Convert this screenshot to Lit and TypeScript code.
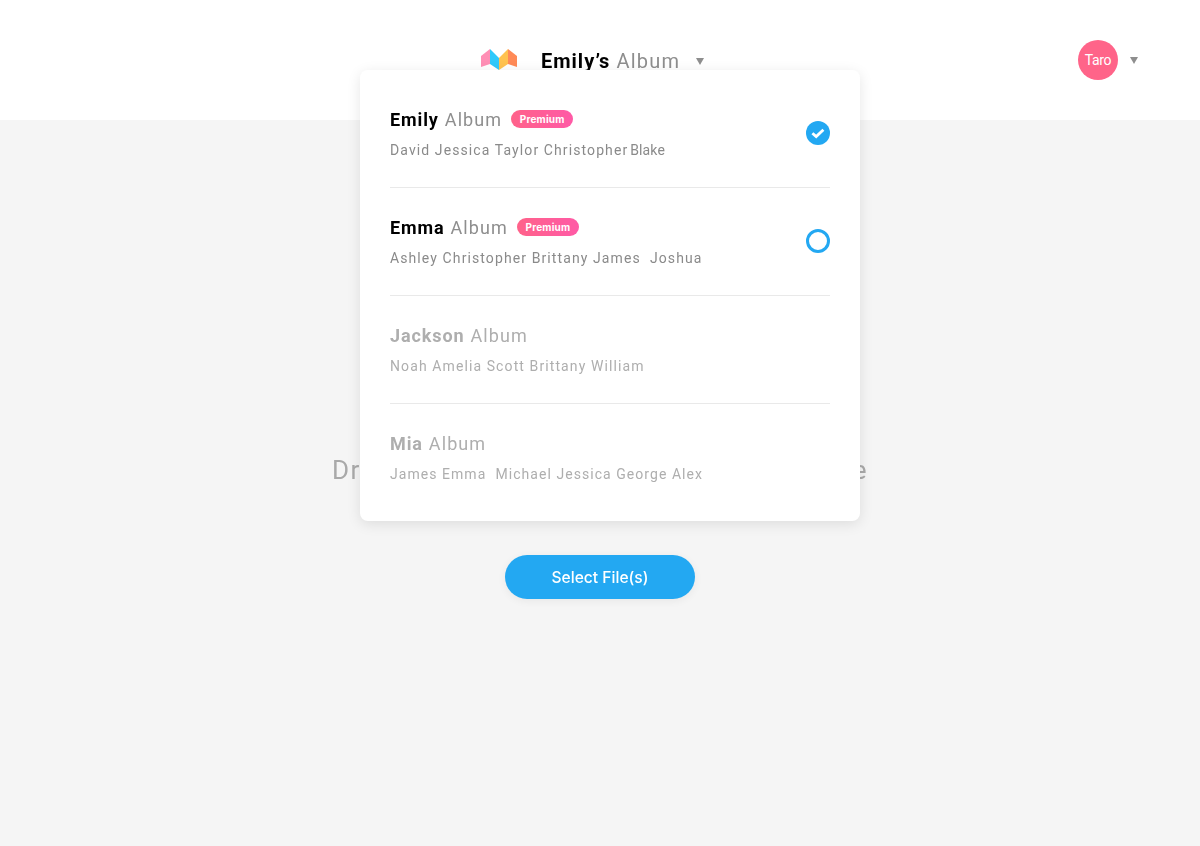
import { LitElement, html, css } from "lit";
import { customElement } from "lit/decorators.js";

interface Album { name: string; people: string[]; premium: boolean; state: "checked" | "open" | "none"; muted: boolean; }

const ALBUMS: Album[] = [
  { name: "Emily", people: ["David Jessica Taylor Christopher", "Blake"], premium: true, state: "checked", muted: false },
  { name: "Emma", people: ["Ashley Christopher Brittany James \u00a0Joshua"], premium: true, state: "open", muted: false },
  { name: "Jackson", people: ["Noah Amelia Scott Brittany William"], premium: false, state: "none", muted: true },
  { name: "Mia", people: ["James Emma \u00a0Michael Jessica George Alex"], premium: false, state: "none", muted: true },
];

@customElement("app-root")
export class AppRoot extends LitElement {
  static styles = css`
    :host { display: block; position: relative; min-height: 846px; background: #f5f5f5; font-family: Roboto, "Liberation Sans", sans-serif; overflow: hidden; }
    .brand-title, .avatar, .drop, .select, .title, .pill, .people { will-change: opacity; }
    .header { height: 120px; background: #fff; display: grid; grid-template-columns: 481px auto 1fr; align-items: center; padding-right: 62px; }
    .brand { display: flex; align-items: center; }
    .logo { width: 36px; height: 22px; display: block; margin-right: 24px; }
    .brand-title { font-size: 20px; letter-spacing: 1.2px; color: #8e8e8e; margin: 2px 16px 0 0; white-space: nowrap; line-height: 24px; }
    .brand-title b { color: #000; font-weight: 700; letter-spacing: 1px; }
    .caret { width: 0; height: 0; border-left: 4.5px solid transparent; border-right: 4.5px solid transparent; border-top: 7px solid #8e8e8e; }
    .brand .caret { margin-top: 2px; }
    .user { justify-self: end; display: flex; align-items: center; gap: 12px; }
    .avatar { width: 40px; height: 40px; border-radius: 50%; background: #ff6489; color: #fff; font-size: 14px; letter-spacing: -0.3px; display: flex; align-items: center; justify-content: center; }
    .main { display: flex; flex-direction: column; align-items: center; padding-top: 332px; }
    .drop { font-size: 26px; line-height: 36px; letter-spacing: 1.6px; color: #a9a9a9; white-space: nowrap; }
    .select { margin-top: 67px; width: 190px; height: 44px; border: 0; border-radius: 22px; background: #23a8f2; color: #fff; font: 500 15.6px Inter, sans-serif; box-shadow: 0 2px 8px rgba(0,0,0,.06); padding: 0; }
    .menu { position: absolute; left: 360px; top: 70px; width: 500px; box-sizing: border-box; padding: 10px 30px 0; height: 451px; background: #fff; border-radius: 8px; box-shadow: 0 3px 14px rgba(0,0,0,.1); }
    .row { height: 108px; box-sizing: border-box; display: flex; align-items: center; justify-content: space-between; border-bottom: 1px solid #e9e9e9; }
    .row:last-child { border-bottom-color: transparent; }
    .row-text { display: flex; flex-direction: column; gap: 8px; }
    .title { display: flex; align-items: center; height: 24px; font-size: 18px; letter-spacing: 1.08px; color: #8e8e8e; white-space: nowrap; }
    .title b { color: #000; font-weight: 700; letter-spacing: 0.9px; margin-right: 6px; }
    .pill { margin: -2px 0 0 9px; height: 18px; width: 62px; border-radius: 9px; background: linear-gradient(90deg, #ff628a, #ff5aa6); color: #fff; font: 700 10px/18px Inter, sans-serif; text-align: center; letter-spacing: 0.2px; }
    .people { display: flex; gap: 2px; font-size: 14px; line-height: 20px; letter-spacing: 1.1px; color: #8a8a8a; white-space: pre; }
    .people span + span { letter-spacing: 0.1px; }
    .row:last-child .people { letter-spacing: 1.05px; }
    .muted .title, .muted .title b, .muted .people { color: #aeaeae; }
    .mark { width: 24px; height: 24px; display: block; margin-top: -1px; }
  `;

  private mark(state: Album["state"]) {
    if (state === "checked") return html`<svg class="mark" viewBox="0 0 24 24"><circle cx="12" cy="12" r="12" fill="#23a8f2"/><path d="M6.4 12.2l3.8 3.4 7.2-6.8" fill="none" stroke="#fff" stroke-width="2.8"/></svg>`;
    if (state === "open") return html`<svg class="mark" viewBox="0 0 24 24"><circle cx="12" cy="12" r="10.5" fill="none" stroke="#23a8f2" stroke-width="3"/></svg>`;
    return null;
  }

  render() {
    return html`
      <div class="header">
        <span></span>
        <div class="brand">
          <svg class="logo" viewBox="0 0 36 22">
            <path d="M0 7 9 0v15L0 18z" fill="#ff8fb5"/>
            <path d="M9 0l9 9v12l-9-6z" fill="#2fc9fb"/>
            <path d="M18 9l9-9v15l-9 6z" fill="#ffc24f"/>
            <path d="M27 0l9 7v11l-9-3z" fill="#ff8a57"/>
          </svg>
          <div class="brand-title"><b>Emily’s</b> Album</div>
          <div class="caret"></div>
        </div>
        <div class="user">
          <div class="avatar">Taro</div>
          <div class="caret"></div>
        </div>
      </div>
      <div class="main">
        <div class="drop">Drop your photos and videos to this page</div>
        <button class="select">Select File(s)</button>
      </div>
      <div class="menu">
        ${ALBUMS.map(a => html`
          <div class="row ${a.muted ? "muted" : ""}">
            <div class="row-text">
              <div class="title"><b>${a.name}</b> Album${a.premium ? html`<span class="pill">Premium</span>` : null}</div>
              <div class="people">${a.people.map(p => html`<span>${p}</span>`)}</div>
            </div>
            ${this.mark(a.state)}
          </div>`)}
      </div>
    `;
  }
}
